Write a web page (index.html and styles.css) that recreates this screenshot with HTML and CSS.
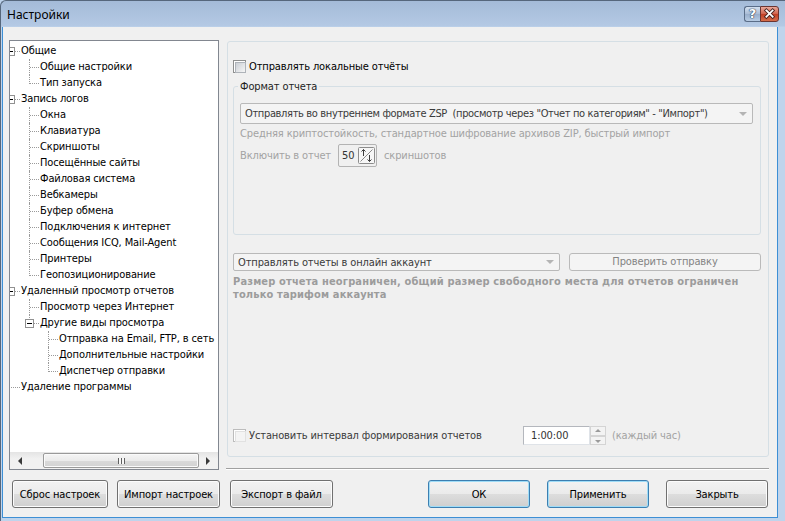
FILE: index.html
```html
<!DOCTYPE html>
<html>
<head>
  <meta charset="utf-8">
  <title>Настройки</title>
  <link rel="stylesheet" href="styles.css">
</head>
<body>
<div class="window">
  <div class="titlebar">
    <span class="title">Настройки</span>
    <span class="capbtn help">?</span>
    <span class="capbtn close">
      <svg width="19" height="16" viewBox="0 0 19 16"><path d="M6 4 L13 11 M13 4 L6 11" stroke="#4a2420" stroke-width="4" stroke-linecap="square"/><path d="M6 4 L13 11 M13 4 L6 11" stroke="#fff" stroke-width="2" stroke-linecap="square"/></svg>
    </span>
  </div>

  <div class="client">
    <div class="main">
      <!-- left tree -->
      <div class="tree">
        <div class="rows">
          <div class="node"><i class="g root"><b class="box"></b></i><span>Общие</span></div>
          <div class="node"><i class="g"></i><i class="g tee"></i><span>Общие настройки</span></div>
          <div class="node"><i class="g"></i><i class="g end"></i><span>Тип запуска</span></div>
          <div class="node"><i class="g root"><b class="box"></b></i><span>Запись логов</span></div>
          <div class="node"><i class="g"></i><i class="g tee"></i><span>Окна</span></div>
          <div class="node"><i class="g"></i><i class="g tee"></i><span>Клавиатура</span></div>
          <div class="node"><i class="g"></i><i class="g tee"></i><span>Скриншоты</span></div>
          <div class="node"><i class="g"></i><i class="g tee"></i><span>Посещённые сайты</span></div>
          <div class="node"><i class="g"></i><i class="g tee"></i><span>Файловая система</span></div>
          <div class="node"><i class="g"></i><i class="g tee"></i><span>Вебкамеры</span></div>
          <div class="node"><i class="g"></i><i class="g tee"></i><span>Буфер обмена</span></div>
          <div class="node"><i class="g"></i><i class="g tee"></i><span>Подключения к интернет</span></div>
          <div class="node"><i class="g"></i><i class="g tee"></i><span>Сообщения ICQ, Mail-Agent</span></div>
          <div class="node"><i class="g"></i><i class="g tee"></i><span>Принтеры</span></div>
          <div class="node"><i class="g"></i><i class="g end"></i><span>Геопозиционирование</span></div>
          <div class="node"><i class="g root"><b class="box"></b></i><span>Удаленный просмотр отчетов</span></div>
          <div class="node"><i class="g"></i><i class="g tee"></i><span>Просмотр через Интернет</span></div>
          <div class="node"><i class="g"></i><i class="g end"><b class="box"></b></i><span>Другие виды просмотра</span></div>
          <div class="node"><i class="g"></i><i class="g"></i><i class="g tee"></i><span>Отправка на Email, FTP, в сеть</span></div>
          <div class="node"><i class="g"></i><i class="g"></i><i class="g tee"></i><span>Дополнительные настройки</span></div>
          <div class="node"><i class="g"></i><i class="g"></i><i class="g end"></i><span>Диспетчер отправки</span></div>
          <div class="node"><i class="g root"></i><span>Удаление программы</span></div>
        </div>
        <div class="hscroll">
          <span class="sb-btn left"></span>
          <span class="sb-track"><span class="sb-thumb"><span class="grip"></span></span></span>
          <span class="sb-btn right"></span>
        </div>
      </div>

      <!-- right page -->
      <div class="panel">
        <div class="page">
          <div class="check-row">
            <span class="cb"></span>
            <span class="cb-label">Отправлять локальные отчёты</span>
          </div>

          <fieldset class="group">
            <legend>Формат отчета</legend>
            <div class="combo wide">
              <span class="combo-text">Отправлять во внутреннем формате ZSP&nbsp; (просмотр через "Отчет по категориям" - "Импорт")</span>
              <span class="arrow"></span>
            </div>
            <div class="hint">Средняя криптостойкость, стандартное шифрование архивов ZIP, быстрый импорт</div>
            <div class="spin-row">
              <span class="hint">Включить в отчет</span>
              <span class="spin">
                <span class="spin-val">50</span>
                <svg width="17" height="17" viewBox="0 0 17 17"><rect x="0.5" y="0.5" width="16" height="16" rx="1" fill="#f6f6f6" stroke="#8c8c8c"/><path d="M2.5 14.5 L14.5 2.5" stroke="#8a8a8a"/><path d="M5.5 2.5 V9 M3.5 4.5 L5.5 2.5 L7.5 4.5" stroke="#3c3c3c" fill="none"/><path d="M11.5 8 V14.5 M9.5 12.5 L11.5 14.5 L13.5 12.5" stroke="#3c3c3c" fill="none"/></svg>
              </span>
              <span class="hint">скриншотов</span>
            </div>
          </fieldset>

          <div class="online-row">
            <div class="combo short">
              <span class="combo-text">Отправлять отчеты в онлайн аккаунт</span>
              <span class="arrow"></span>
            </div>
            <span class="btn-off">Проверить отправку</span>
          </div>
          <div class="note">Размер отчета неограничен, общий размер свободного места для отчетов ограничен<br>только тарифом аккаунта</div>

          <div class="interval-row">
            <span class="interval-check">
              <span class="cb off"></span>
              <span class="cb-label dim">Установить интервал формирования отчетов</span>
            </span>
            <span class="timebox">1:00:00</span>
            <span class="updown"><span class="ud up"></span><span class="ud down"></span></span>
            <span class="hint every">(каждый час)</span>
          </div>
        </div>
        <div class="sep"></div>
      </div>
    </div>

    <div class="buttons">
      <span class="btn w96">Сброс настроек</span>
      <span class="btn">Импорт настроек</span>
      <span class="btn">Экспорт в файл</span>
      <span class="spacer"></span>
      <span class="btn default">ОК</span>
      <span class="btn default">Применить</span>
      <span class="btn">Закрыть</span>
    </div>
  </div>
</div>
</body>
</html>
```

FILE: styles.css
```css
* { box-sizing: border-box; }
body { margin: 0; font-family: "DejaVu Sans Condensed", "Liberation Sans", sans-serif; font-size: 11px; letter-spacing: -0.12px; color: #000; background: #bcd2eb; }

/* window frame */
.window { width: 785px; height: 521px; display: flex; flex-direction: column; border-left: 1px solid #56677c; border-top: 1px solid #56677c; border-radius: 6px 0 0 0; padding: 0 7px 3px 1px;
  background: linear-gradient(to bottom, #a4bbd8 0, #b4c9e4 25px, #bfd4ec 26px, #bfd4ec 100%); }
.titlebar { height: 26px; display: flex; align-items: flex-start; padding: 5px 6px 0 5px; margin-right: -7px; }
.title { flex: 1; font-family: "Noto Sans", "Open Sans", sans-serif; font-size: 12px; letter-spacing: 0; line-height: 17px; color: #000; }
.capbtn { height: 16px; display: flex; align-items: center; justify-content: center; border: 1px solid #5a6d88; }
.help { width: 16px; border-radius: 3px 0 0 3px; border-right: 0; background: linear-gradient(#d3e0ef, #a9bcd6 50%, #98aecb 51%, #b7cbe3);
  color: #fff; font: bold 13px "DejaVu Sans", sans-serif; line-height: 14px; text-shadow: 0 0 1px #2b3a50, 0 0 1px #2b3a50, 0 0 1px #2b3a50; }
.close { width: 19px; border-radius: 0 3px 3px 0; border-color: #6b3430; background: linear-gradient(#e9a99b, #d0624b 50%, #c03d23 51%, #d56e4c); }

.client { flex: 1; background: #f0f0f0; border: 1px solid #3d8fd5; border-top: 0; display: flex; flex-direction: column; }
.main { display: flex; height: 430px; margin-top: 13px; padding-left: 6px; }

/* tree */
.tree { width: 210px; border: 1px solid #828790; background: #fff; display: flex; flex-direction: column; overflow: hidden; }
.rows { flex: 1; padding-top: 2px; margin-left: -9px; overflow: hidden; }
.node { display: flex; height: 16px; line-height: 16px; white-space: nowrap; }
.node span { padding-left: 1px; }
.g { width: 19px; height: 16px; flex: none; position: relative; }
.g.tee::before, .g.end::before { content: ""; position: absolute; left: 9px; top: 0; height: 16px; border-left: 1px dotted #9a9a9a; }
.g.end::before { height: 9px; }
.g.tee::after, .g.end::after, .g.root::after { content: ""; position: absolute; left: 10px; top: 8px; width: 9px; border-top: 1px dotted #9a9a9a; }
.box { position: absolute; left: 5px; top: 4px; width: 9px; height: 9px; border: 1px solid #919191; background: #fff; z-index: 1; }
.box::after { content: ""; position: absolute; left: 1px; top: 3px; width: 5px; height: 1px; background: #000; }

.hscroll { height: 17px; flex: none; display: flex; background: linear-gradient(#e4e4e4, #f1f1f1 40%, #f1f1f1); }
.sb-btn { width: 17px; flex: none; position: relative; }
.sb-btn.left::after { content: ""; position: absolute; left: 8px; top: 5px; border: 4px solid transparent; border-left: 0; border-right-color: #3a3a3a; }
.sb-btn.right::after { content: ""; position: absolute; left: 5px; top: 5px; border: 4px solid transparent; border-right: 0; border-left-color: #3a3a3a; }
.sb-track { flex: 1; padding: 1px 0 1px 16px; }
.sb-thumb { display: flex; align-items: center; justify-content: center; width: 156px; height: 15px; border: 1px solid #9a9a9a; border-radius: 2px;
  background: linear-gradient(#f5f5f5, #ebebeb 50%, #dadada 51%, #d2d2d2); box-shadow: inset 0 0 0 1px #fafafa; }
.grip { width: 7px; height: 6px; background: repeating-linear-gradient(to right, #606060 0 1px, #f8f8f8 1px 3px); }

/* right side */
.panel { width: 543px; margin-left: 7px; display: flex; flex-direction: column; }
.page { height: 418px; margin: 1px 0 0 1px; border: 1px solid #d5dfe5; border-radius: 3px; display: flex; flex-direction: column; padding: 18px 7px 11px 5px; }
.check-row { display: flex; align-items: center; height: 13px; }
.cb { width: 13px; height: 13px; flex: none; border: 1px solid #8e8f8f; background: #fff; position: relative; }
.cb::after { content: ""; position: absolute; left: 1px; top: 1px; width: 9px; height: 9px; border: 1px solid #aeb3b9; background: linear-gradient(135deg, #cbcfd5, #f6f6f6); }
.cb.off { border-color: #bcbcbc; }
.cb.off::after { border-color: #e1e1e1; background: #f4f4f4; }
.cb-label { margin-left: 3px; line-height: 13px; white-space: nowrap; }
.cb-label.dim { color: #3a3a3a; }

.group { margin: 7px 0 0; border: 1px solid #d5dfe5; border-radius: 3px; padding: 10px 7px 67px 6px; min-width: 0; }
.group legend { padding: 0 2px; margin-left: -2px; line-height: 13px; color: #1e1e1e; }
.combo { height: 21px; display: flex; align-items: center; border: 1px solid #b9b9b9; border-radius: 2px; background: #f4f4f4; padding-left: 4px; color: #3a3a3a; }
.combo-text { flex: 1; white-space: nowrap; overflow: hidden; }
.combo.wide .combo-text { letter-spacing: -0.35px; }
.arrow { width: 17px; height: 100%; flex: none; position: relative; }
.arrow::after { content: ""; position: absolute; left: 4px; top: 8px; border: 4px solid transparent; border-bottom: 0; border-top-color: #b4b4b4; }
.hint { color: #a3a3a3; line-height: 13px; white-space: nowrap; }
.group > .hint { margin-top: 3px; }
.spin-row { display: flex; align-items: center; margin-top: 4px; height: 23px; }
.spin { display: flex; align-items: center; height: 23px; margin: 0 7px; padding: 0 1px 0 3px; border: 1px solid #b3b3b3; border-radius: 2px; color: #333; }
.spin-val { width: 16px; }

.online-row { display: flex; margin-top: 18px; height: 18px; }
.combo.short { width: 327px; height: 18px; }
.combo.short .arrow::after { top: 6px; }
.btn-off { width: 192px; margin-left: 9px; border: 1px solid #bababa; border-radius: 3px; background: #f4f4f4; color: #838383; text-align: center; line-height: 16px; }
.note { margin-top: 4px; font-weight: bold; letter-spacing: 0.15px; color: #9c9c9c; line-height: 13px; white-space: nowrap; }

.interval-row { margin-top: auto; display: flex; align-items: center; height: 19px; }
.interval-check { width: 290px; display: flex; align-items: center; }
.timebox { width: 67px; height: 19px; background: #fff; border: 1px solid #dfe3e8; border-top-color: #b4b7bd; border-left-color: #b4b7bd; padding-left: 7px; line-height: 17px; color: #333; }
.updown { width: 16px; height: 19px; display: flex; flex-direction: column; }
.ud { flex: 1; border: 1px solid #d4d4d4; background: #f3f3f3; position: relative; }
.ud.up::after { content: ""; position: absolute; left: 4px; top: 2px; border: 3px solid transparent; border-top: 0; border-bottom-color: #9a9a9a; }
.ud.down::after { content: ""; position: absolute; left: 4px; top: 3px; border: 3px solid transparent; border-bottom: 0; border-top-color: #9a9a9a; }
.hint.every { margin-left: 6px; }

.sep { margin-top: 11px; height: 2px; border-top: 1px solid #a0a0a0; border-bottom: 1px solid #fff; }

/* bottom buttons */
.buttons { display: flex; margin-top: 10px; padding: 0 9px 0 9px; height: 28px; }
.btn { width: 103px; height: 28px; margin-right: 9px; display: flex; align-items: center; justify-content: center; border: 1px solid #707070; border-radius: 3px;
  background: linear-gradient(#f2f2f2, #ebebeb 50%, #dddddd 51%, #cfcfcf); box-shadow: inset 0 0 0 1px #fcfcfc; white-space: nowrap; }
.btn.w96 { width: 96px; }
.btn:nth-child(3) { margin-right: 0; margin-left: 1px; }
.spacer { flex: 1; }
.btn.default { width: 102px; border-color: #3c7fb1; box-shadow: inset 0 0 0 1px #9fdcf7; margin-right: 17px; }
.btn:last-child { width: 102px; margin-right: 0; }
```
